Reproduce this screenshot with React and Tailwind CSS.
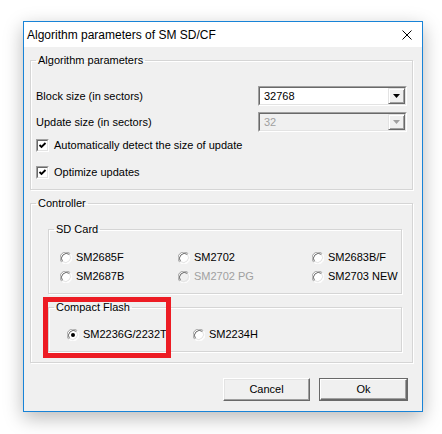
import React from 'react'

const font = { fontFamily: '"Liberation Sans", Arial, sans-serif' }

function Radio({ checked, disabled }) {
  return (
    <svg width="12" height="12" viewBox="0 0 12 12" className="shrink-0">
      <circle cx="6" cy="6" r="5.5" fill={disabled ? '#f0f0f0' : '#ffffff'} />
      {/* outer ring: dark top-left, light bottom-right */}
      <path d="M1.75 10.25 A6 6 0 0 1 10.25 1.75" stroke="#a0a0a0" strokeWidth="1" fill="none" />
      <path d="M10.25 1.75 A6 6 0 0 1 1.75 10.25" stroke="#ffffff" strokeWidth="1" fill="none" />
      <path d="M2.5 9.5 A5 5 0 0 1 9.5 2.5" stroke="#696969" strokeWidth="1" fill="none" />
      <path d="M9.5 2.5 A5 5 0 0 1 2.5 9.5" stroke="#e3e3e3" strokeWidth="1" fill="none" />
      {checked && <circle cx="6" cy="6" r="2" fill="#000000" />}
    </svg>
  )
}

function Checkbox({ checked }) {
  return (
    <div className="w-[13px] h-[13px] shrink-0 border border-t-[#a0a0a0] border-l-[#a0a0a0] border-b-white border-r-white">
      <div className="w-full h-full bg-white border border-t-[#696969] border-l-[#696969] border-b-[#e3e3e3] border-r-[#e3e3e3]">
        {checked && (
          <svg width="9" height="9" viewBox="0 0 9 9">
            <path d="M1.5 4 L3.5 6 L7.5 2" stroke="#000" strokeWidth="1.8" fill="none" />
          </svg>
        )}
      </div>
    </div>
  )
}

function Combo({ value, disabled }) {
  return (
    <div className="w-[149px] h-[20px] border border-t-[#a0a0a0] border-l-[#a0a0a0] border-b-white border-r-white">
      <div
        className={`w-full h-full flex items-center border border-t-[#696969] border-l-[#696969] border-b-[#e3e3e3] border-r-[#e3e3e3] ${
          disabled ? 'bg-[#f0f0f0] text-[#a0a0a0]' : 'bg-white text-black'
        }`}
      >
        <span className="flex-1 pl-[4px] leading-none">{value}</span>
        <div className="w-[17px] h-full bg-[#f0f0f0] flex items-center justify-center border border-t-[#e3e3e3] border-l-[#e3e3e3] border-b-[#696969] border-r-[#696969] shadow-[inset_1px_1px_0_#ffffff,inset_-1px_-1px_0_#a0a0a0]">
          <svg width="7" height="4" viewBox="0 0 7 4">
            <path d="M0 0 H7 L3.5 4 Z" fill={disabled ? '#a0a0a0' : '#000000'} />
          </svg>
        </div>
      </div>
    </div>
  )
}

// group box: etched frame with caption over the top line
function Group({ title, className = '', bodyClassName = '', children }) {
  return (
    <fieldset
      className={`border border-[#d5d5d5] shadow-[inset_1px_1px_0_#ffffff,1px_1px_0_#ffffff] ${className}`}
    >
      <legend className="ml-[5px] px-[2px] leading-[13px]">{title}</legend>
      <div className={bodyClassName}>{children}</div>
    </fieldset>
  )
}

function RadioItem({ label, checked, disabled }) {
  return (
    <div className="flex items-center gap-[4px] h-[13px]">
      <Radio checked={checked} disabled={disabled} />
      <span className={disabled ? 'text-[#a0a0a0]' : 'text-black'}>{label}</span>
    </div>
  )
}

export default function App() {
  return (
    <div className="w-[442px] h-[434px] bg-white pt-[21px] pl-[23px] text-[11px] text-black" style={font}>
      <div className="relative w-[400px] h-[391px] border border-[#1883d7] bg-[#f0f0f0] flex flex-col shadow-[0_6px_18px_rgba(0,0,0,0.28)]">
        {/* Title bar */}
        <div className="h-[25px] bg-white flex items-center justify-between pl-[3px] pr-[10px]">
          <span className="text-[12px]">Algorithm parameters of SM SD/CF</span>
          <svg width="10" height="10" viewBox="0 0 10 10">
            <path d="M0.5 0.5 L9.5 9.5 M9.5 0.5 L0.5 9.5" stroke="#000" strokeWidth="1" />
          </svg>
        </div>

        {/* Body */}
        <div className="flex-1 flex flex-col pl-[6px] pr-[9px]">
          <Group title="Algorithm parameters" className="mt-[7px]" bodyClassName="px-[5px] pt-[19px] pb-[10px]">
            <div className="flex items-center justify-between">
              <span>Block size (in sectors)</span>
              <Combo value="32768" />
            </div>
            <div className="flex items-center justify-between mt-[6px]">
              <span>Update size (in sectors)</span>
              <Combo value="32" disabled />
            </div>
            <div className="flex items-center gap-[5px] mt-[7px] h-[13px]">
              <Checkbox checked />
              <span>Automatically detect the size of update</span>
            </div>
            <div className="flex items-center gap-[5px] mt-[14px] h-[13px]">
              <Checkbox checked />
              <span>Optimize updates</span>
            </div>
          </Group>

          <Group title="Controller" className="mt-[7px]" bodyClassName="pl-[17px] pr-[10px] pt-[13px] pb-[10px]">
            <Group title="SD Card" bodyClassName="pl-[11px] pt-[15px] pb-[10px]">
              <div className="grid grid-cols-[118px_134px_1fr] gap-y-[6px]">
                <RadioItem label="SM2685F" />
                <RadioItem label="SM2702" />
                <RadioItem label="SM2683B/F" />
                <RadioItem label="SM2687B" />
                <RadioItem label="SM2702 PG" disabled />
                <RadioItem label="SM2703 NEW" />
              </div>
            </Group>
            <Group title="Compact Flash" className="mt-[7px]" bodyClassName="pl-[18px] pt-[14px] pb-[10px]">
              <div className="grid grid-cols-[126px_1fr]">
                <RadioItem label="SM2236G/2232T" checked />
                <RadioItem label="SM2234H" />
              </div>
            </Group>
          </Group>

          <div className="flex justify-end gap-[9px] mt-[15px] pr-[5px]">
            <button className="w-[87px] h-[23px] bg-[#f0f0f0] border border-t-white border-l-white border-b-[#696969] border-r-[#696969] shadow-[inset_-1px_-1px_0_#a0a0a0,inset_1px_1px_0_#e3e3e3]">
              Cancel
            </button>
            <button className="w-[89px] h-[23px] bg-[#f0f0f0] border border-[#696969]">
              <div className="w-full h-full flex items-center justify-center border border-t-white border-l-white border-b-[#696969] border-r-[#696969] shadow-[inset_-1px_-1px_0_#a0a0a0]">
                Ok
              </div>
            </button>
          </div>
        </div>

        {/* Red annotation box */}
        <div className="absolute left-[19px] top-[275px] w-[128px] h-[61px] border-[5px] border-[#ed1c24] pointer-events-none" />
      </div>
    </div>
  )
}
